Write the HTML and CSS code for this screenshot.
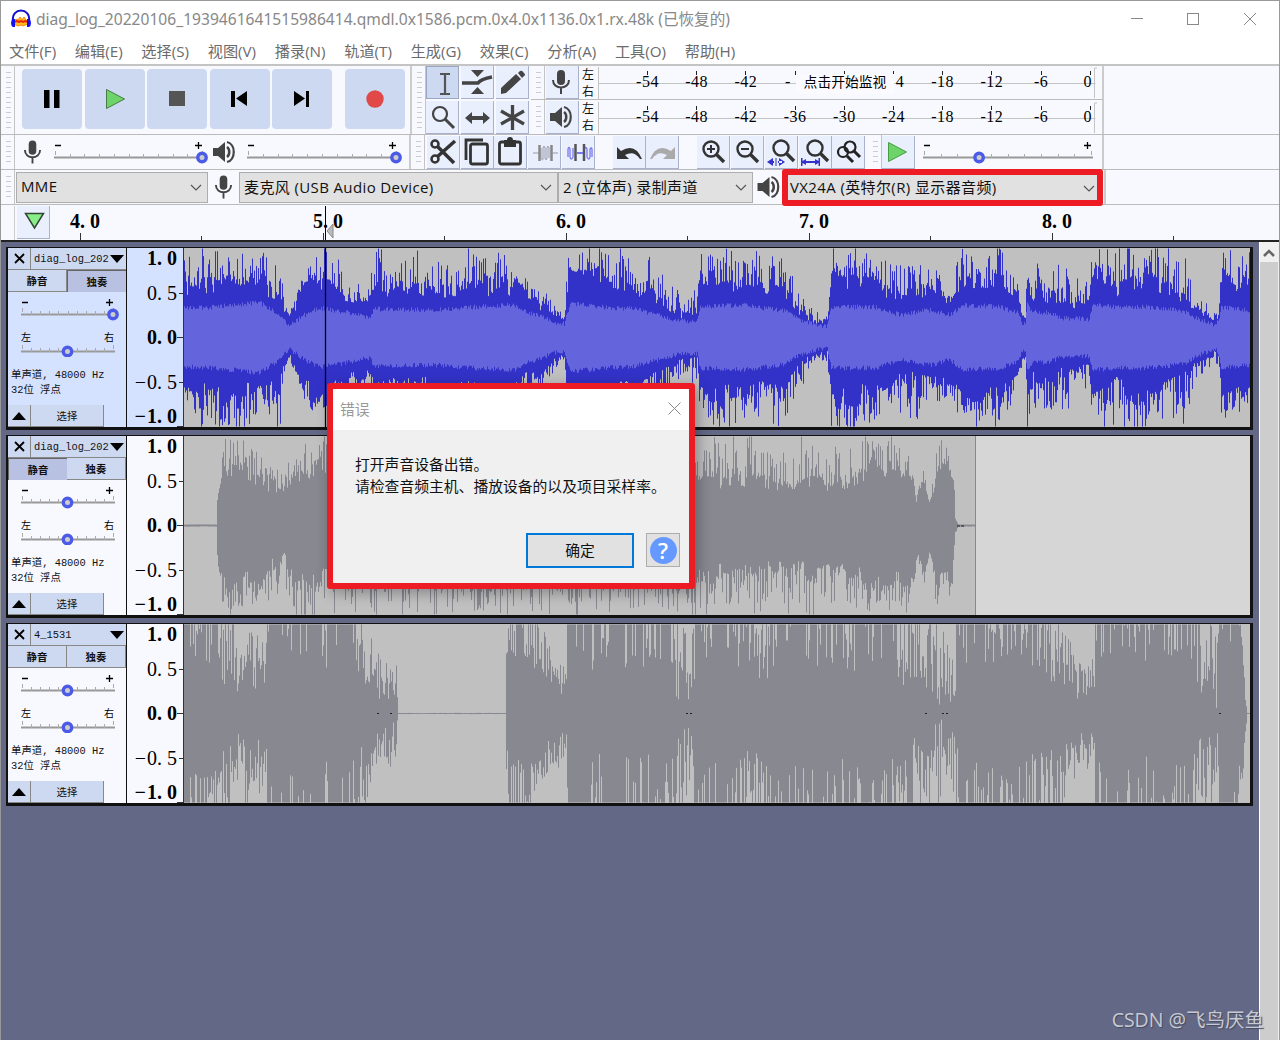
FILE: index.html
```
<!DOCTYPE html>
<html lang="zh-CN">

<head>
    <meta charset="UTF-8">
    <title>Audacity</title>
    <link rel="stylesheet" href="styles.css">
</head>

<body>
    <!-- Icons used more than once -->
    <svg class="defs">
        <symbol id="mic" viewBox="0 0 20 26">
            <rect x="6" y="1" width="8" height="15" rx="4" />
            <path d="M2 11c0 10 16 10 16 0M10 18v7" fill="none" stroke="#444" stroke-width="2" />
        </symbol>
        <symbol id="speaker" viewBox="0 0 24 24">
            <path d="M1 8h5l7-6v20l-7-6H1z" />
            <path d="M15 7c3 2 3 8 0 10" stroke-width="2.5" fill="none" stroke="#444" />
            <path d="M15 2c9 2 9 18 0 20" stroke-width="2.2" fill="none" stroke="#444" />
        </symbol>
        <symbol id="lens" viewBox="0 0 30 30">
            <circle cx="13" cy="12" r="7.5" fill="none" stroke="#333" stroke-width="2.4" />
            <path d="M18 17l8 8" stroke="#333" stroke-width="3.4" />
        </symbol>
        <symbol id="chevron" viewBox="0 0 12 8">
            <path d="M1 1l5 5 5-5" fill="none" stroke="#555" stroke-width="1.2" />
        </symbol>
    </svg>

    <div class="window">
        <div class="titlebar">
            <svg class="logo" width="22" height="20" viewBox="0 0 22 20">
                <path d="M4 13l2-3 2 1 2-3 2 3 2-3 2 3 2 1v3l-3 1-2 1-2-1-3 1-4-2z" fill="#fb2" stroke="#f80" />
                <path d="M4 13l3-1 2 1 2-1 2 1 2-1 3 1" fill="none" stroke="#e20" stroke-width="2" />
                <path d="M3 12C1-2 21-2 19 12" fill="none" stroke="#11c" stroke-width="2" />
                <path d="M5 10v8H3q-2-1-2-4t2-4zM17 10v8h2q2-1 2-4t-2-4z" fill="#11e" />
            </svg>
            <span class="title">diag_log_20220106_1939461641515986414.qmdl.0x1586.pcm.0x4.0x1136.0x1.rx.48k (已恢复的)</span>
            <svg class="controls" width="126" height="14" viewBox="0 0 126 14" fill="none" stroke="#888">
                <path d="M1 6.500h12M114 1l12 12M126 1l-12 12" />
                <rect x="57.500" y="1.500" width="11" height="11" />
            </svg>
        </div>

        <div class="menubar">
            <span>文件(F)</span><span>编辑(E)</span><span>选择(S)</span><span>视图(V)</span><span>播录(N)</span><span>轨道(T)</span><span>生成(G)</span><span>效果(C)</span><span>分析(A)</span><span>工具(O)</span><span>帮助(H)</span>
        </div>

        <div class="toolbars">
            <div class="row row-main">
                <div class="bar transport">
                    <i class="grip"></i>
                    <div class="big-buttons">
                        <button><svg width="60" height="60"><path d="M22 21h5.500v18H22zM32 21h5.500v18H32z" fill="#000" /></svg></button>
                        <button><svg width="60" height="60"><path d="M21.500 20.500v19l18-9.500z" fill="#6cd468" stroke="#4a7a48" /></svg></button>
                        <button><svg width="60" height="60"><path d="M22 22h16v15H22z" fill="#555" /></svg></button>
                        <button><svg width="60" height="60"><path d="M21 22h4v16h-4zM37 22v15l-11-7.500z" fill="#000" /></svg></button>
                        <button><svg width="60" height="60"><path d="M22 22v15l11-7.500zM34 22h3v16h-3z" fill="#000" /></svg></button>
                        <button class="record"><svg width="60" height="60"><circle cx="30" cy="30" r="8.700" fill="#e14848" /></svg></button>
                    </div>
                </div>
                <div class="bar tools">
                    <i class="grip"></i>
                    <div class="tool-grid">
                        <button class="tool active"><svg width="33" height="32"><path d="M14 7h10M14 27h10M19 7v20" stroke="#555" stroke-width="2.200" /></svg></button>
                        <button class="tool"><svg width="33" height="32"><path d="M10 4h13l-6.500 7zM10 28h13l-6.500-7z" fill="#444" /><path d="M1 17h16q3-4 14-6" fill="none" stroke="#444" stroke-width="3.500" /></svg></button>
                        <button class="tool"><svg width="33" height="32"><path d="M5 28v-6L20 8l5 5-15 14zM22 7l2-2q2-1 4 2 2 2 0 3l-2 2z" fill="#444" /></svg></button>
                        <button class="tool"><svg width="33" height="32"><circle cx="14" cy="13" r="7" fill="none" stroke="#444" stroke-width="2.200" /><path d="M19 18l9 9" stroke="#444" stroke-width="3" /></svg></button>
                        <button class="tool"><svg width="33" height="32"><path d="M4 17l7-6v4h11v-4l7 6-7 6v-4H11v4z" fill="#444" /></svg></button>
                        <button class="tool"><svg width="33" height="32"><path d="M16.500 4v25M5 10l23 13M28 10L5 23" stroke="#444" stroke-width="3.300" /></svg></button>
                    </div>
                </div>
                <div class="meters">
                    <div class="bar meter">
                        <i class="grip"></i>
                        <button class="tool"><svg width="20" height="26" fill="#444"><use href="#mic" /></svg></button>
                        <div class="channels"><span>左</span><span>右</span></div>
                        <svg class="scale" width="500" height="33" data-hint="点击开始监视"></svg>
                    </div>
                    <div class="bar meter">
                        <i class="grip"></i>
                        <button class="tool"><svg width="24" height="24" fill="#444"><use href="#speaker" /></svg></button>
                        <div class="channels"><span>左</span><span>右</span></div>
                        <svg class="scale" width="500" height="33"></svg>
                    </div>
                </div>
            </div>

            <div class="row row-edit">
                <div class="bar mixer">
                    <i class="grip"></i>
                    <svg class="mic" width="19" height="26" fill="#444"><use href="#mic" /></svg>
                    <svg class="slider" width="158" height="30" data-ticks="10" data-pos="10"></svg>
                    <svg class="spk" width="24" height="24" fill="#444"><use href="#speaker" /></svg>
                    <svg class="slider" width="159" height="30" data-ticks="10" data-pos="10"></svg>
                </div>
                <div class="bar edit">
                    <i class="grip"></i>
                    <div class="edit-group">
                        <button class="tool"><svg width="32" height="32" fill="none" stroke="#333"><circle cx="8" cy="8" r="3.500" stroke-width="2.500" /><circle cx="8" cy="23" r="3.500" stroke-width="2.500" /><path d="M10 10l17 17M10 21L28 5" stroke-width="3.500" /></svg></button>
                        <button class="tool"><svg width="32" height="32" fill="none" stroke="#333" stroke-width="2.800"><rect x="9.500" y="8" width="17" height="20" rx="2" /><path d="M5 24V4h17" /></svg></button>
                        <button class="tool"><svg width="32" height="32" fill="none" stroke="#333" stroke-width="2.800"><rect x="5.500" y="6" width="21" height="22" rx="2" /><path d="M10 4h12v7H10z" fill="#333" stroke="none" /><circle cx="16" cy="4" r="3" fill="#333" stroke="none" /></svg></button>
                        <button class="tool"><svg width="32" height="32" fill="none" stroke="#888"><path d="M5 17h6M23 17h7" stroke="#99a" /><path d="M13 12v10q2 4 2 0V12q1-4 2 0v10q1 4 2 0V12q1-4 2 0v10" stroke="#99a" /><path d="M11.500 9v16M23.500 9v16" stroke-width="2.500" /></svg></button>
                        <button class="tool"><svg width="32" height="32" fill="none" stroke="#77e"><path d="M6 21v-8q1-3 2 0v8q1 4 3 0v-9M22 21v-8q2-3 3 0v8q2 4 3 0v-8q1-2 2 0v8" stroke-width="1.300" /><path d="M13.500 8v17M22 8v17" stroke="#555" stroke-width="2.500" /><path d="M15 17h6" stroke-width="2" /></svg></button>
                    </div>
                    <div class="edit-group">
                        <button class="tool"><svg width="32" height="32"><path d="M4 11v12h12l-4-4q9-5 15 4h2Q22 6 8 15z" fill="#333" /></svg></button>
                        <button class="tool"><svg width="32" height="32"><path d="M29 11v12H17l4-4q-9-5-15 4H4Q11 6 25 15z" fill="#aaa" /></svg></button>
                    </div>
                    <div class="edit-group">
                        <button class="tool"><svg width="30" height="30"><use href="#lens" /><path d="M9 12h8M13 8v8" stroke="#333" stroke-width="2" /></svg></button>
                        <button class="tool"><svg width="30" height="30"><use href="#lens" /><path d="M9 12h8" stroke="#333" stroke-width="2" /></svg></button>
                        <button class="tool"><svg width="32" height="32"><use href="#lens" x="3" width="30" height="30" /><path d="M2 26l6-4v8zM20 26l-6-4v8zM5 25h4v2H5zM13 25h4v2h-4zM10.500 22h1v8h-1z" fill="#33c" /></svg></button>
                        <button class="tool"><svg width="32" height="32"><use href="#lens" x="3" width="30" height="30" /><path d="M2 22h1.500v3L7 23v2h9v-2l3.500 2v-3H21v8h-1.500v-3L16 29v-2H7v2l-3.500-2v3H2z" fill="#33c" /></svg></button>
                        <button class="tool"><svg width="32" height="32" fill="none" stroke="#222" stroke-width="2.200"><circle cx="18" cy="11" r="5.500" /><circle cx="11" cy="16" r="5" /><path d="M15 20l6 6M22 15l6 6" stroke-width="3" /></svg></button>
                    </div>
                </div>
                <div class="bar speed">
                    <i class="grip"></i>
                    <button class="tool"><svg width="32" height="32"><path d="M6.500 6.500v19L24.500 16z" fill="#6cd468" stroke="#4a9a48" /></svg></button>
                    <svg class="slider" width="178" height="30" data-ticks="10" data-pos="3.300"></svg>
                </div>
            </div>

            <div class="row row-device">
                <div class="bar device">
                    <i class="grip"></i>
                    <div class="combo host"><span>MME</span><svg width="12" height="8"><use href="#chevron" /></svg></div>
                    <svg class="mic" width="19" height="26" fill="#444"><use href="#mic" /></svg>
                    <div class="combo input"><span>麦克风 (USB Audio Device)</span><svg width="12" height="8"><use href="#chevron" /></svg></div>
                    <div class="combo chan"><span>2 (立体声) 录制声道</span><svg width="12" height="8"><use href="#chevron" /></svg></div>
                    <svg class="spk" width="25" height="24" fill="#444"><use href="#speaker" /></svg>
                    <div class="combo output"><span>VX24A (英特尔(R) 显示器音频)</span><svg width="12" height="8"><use href="#chevron" /></svg></div>
                </div>
            </div>
        </div>

        <div class="timeline">
            <i class="pad"></i>
            <button class="tool pin"><svg width="32" height="32"><path d="M8.500 7.500h18L17.500 22z" fill="#8e8" stroke="#354535" stroke-width="1.500" /></svg></button>
            <svg id="ruler" width="1229" height="34"></svg>
        </div>

        <div class="workspace">
            <div class="tracks" id="tracks"></div>
            <div class="scrollbar"><svg width="12" height="8" fill="none" stroke="#666" stroke-width="2.500"><path d="M1 7l5-5 5 5" /></svg></div>
        </div>
    </div>

    <div class="dialog">
        <div class="dialog-title"><span>错误</span><svg width="13" height="13" stroke="#888"><path d="M.5.5l12 12M12.500.5l-12 12" /></svg></div>
        <div class="dialog-body">
            <p>打开声音设备出错。</p>
            <p>请检查音频主机、播放设备的以及项目采样率。</p>
            <div class="dialog-buttons">
                <button class="ok">确定</button>
                <button class="help"><span>?</span></button>
            </div>
        </div>
    </div>

    <div class="watermark">CSDN @飞鸟厌鱼</div>

    <script src="script.js"></script>
</body>

</html>
```
FILE: styles.css
```
* {
    box-sizing: border-box;
}

body {
    margin: 0;
    width: 1280px;
    height: 1040px;
    overflow: hidden;
    position: relative;
    font-family: "Open Sans", "Noto Sans CJK SC", sans-serif;
    color: #111;
}

button {
    border: 0;
    padding: 0;
    font: inherit;
    color: inherit;
}

svg {
    display: block;
    flex: none;
}

.defs {
    display: none;
}

.window {
    height: 1040px;
    border: 1px solid #999;
    border-bottom: 0;
    display: flex;
    flex-direction: column;
    background: #f8f9ff;
}

/* Title and menu */
.titlebar {
    height: 38px;
    background: #fff;
    display: flex;
    align-items: center;
    padding: 0 23px 2px 9px;
    color: #888;
}

.title {
    font-family: "Noto Sans", "Noto Sans CJK SC", sans-serif;
    font-size: 15.600px;
    margin: -1px 0 0 4px;
    white-space: nowrap;
}

.controls {
    margin-left: auto;
}

.menubar {
    height: 25px;
    background: #fff;
    display: flex;
    align-items: center;
    gap: 18.700px;
    padding: 0 0 4px 8px;
    font-size: 15.200px;
    color: #6b6b6b;
    white-space: nowrap;
}

/* Toolbars */
.toolbars {
    border-top: 2px solid #c4c4c4;
    height: 142px;
}

.row {
    display: flex;
    height: 35px;
    border-bottom: 1px solid #bbb;
}

.row-main {
    height: 69px;
}

.bar {
    display: flex;
    align-items: center;
    border-right: 2px solid #ccc;
}

.grip {
    align-self: stretch;
    width: 14px;
    flex: none;
    border-right: 1px solid #c4c4c4;
    background: repeating-linear-gradient(#ccc 0 1px, transparent 1px 5px) 5px 6px / 5px calc(100% - 12px) no-repeat;
}

.transport {
    width: 411px;
}

.big-buttons {
    display: flex;
    gap: 2.500px;
    margin: 0 0 2px 7px;
}

.big-buttons button {
    width: 60px;
    height: 60px;
    border-radius: 4px;
    background: #cdd9f1;
}

.big-buttons .record {
    margin-left: 10px;
}

.tools {
    width: 119px;
    border-right: 0;
}

.tool-grid {
    display: grid;
    grid-template-columns: repeat(3, 33px);
    gap: 2px;
}

.tool {
    width: 33px;
    height: 33px;
    flex: none;
    background: #e9effd;
    border-right: 1px solid #a9b2cc;
    border-bottom: 1px solid #a9b2cc;
    display: flex;
    align-items: center;
    justify-content: center;
    overflow: hidden;
}

.tool.active {
    background: #cdd9f1;
    border: 1px solid #9ba6c2;
}

.meters {
    width: 573px;
    display: flex;
    flex-direction: column;
}

.meter {
    height: 34px;
    border-bottom: 1px solid #bbb;
}

.meter + .meter {
    border-bottom: 0;
}

.meter .tool {
    margin-left: 1px;
}

.meter .tool svg {
    margin-right: 2px;
}

.channels {
    display: flex;
    flex-direction: column;
    width: 18px;
    padding-left: 3px;
    font-size: 12px;
    line-height: 17px;
}

.scale text {
    font: 16px "Liberation Serif", serif;
    letter-spacing: .5px;
    text-anchor: middle;
}

.scale .hint {
    font: 13.800px "Noto Sans CJK SC", sans-serif;
    letter-spacing: 0;
}

.mixer {
    width: 410px;
}

.mixer .mic {
    margin: 0 8px 0 8px;
}

.mixer .spk {
    margin: 0 7px 0 4px;
}

.edit {
    width: 457px;
    border-right: 0;
}

.edit-group {
    display: flex;
    gap: .7px;
    margin-right: 18px;
}

.edit .grip {
    margin-right: 2px;
}

.edit-group:last-child {
    margin-right: 0;
}

.speed {
    width: 236px;
}

.speed .tool {
    margin-right: 4px;
}

.device {
    width: 1105px;
}

.combo {
    height: 31px;
    background: #e1e1e1;
    border: 1px solid #adadad;
    display: flex;
    align-items: center;
    justify-content: space-between;
    padding: 0 5px 2px 4px;
    font-size: 15px;
    letter-spacing: .38px;
    white-space: nowrap;
}

.combo svg {
    margin-top: 4px;
}

.host {
    width: 192px;
    margin-left: 1px;
}

.device .mic {
    margin: 0 6px;
}

.input {
    width: 319px;
}

.chan {
    width: 195px;
}

.device .spk {
    margin: 0 1px 0 3px;
}

.output {
    width: 321px;
    height: 37px;
    border: 6px solid #ed1c24;
    border-radius: 3px;
    padding: 0 2px 1px;
    position: relative;
}

/* Timeline */
.timeline {
    height: 36px;
    display: flex;
    border-bottom: 2px solid #222;
}

.pad {
    width: 14px;
    border-right: 1px solid #ccc;
}

.pin {
    margin: 0 0 0 2px;
}

#ruler text {
    font: bold 20px "Liberation Serif", serif;
    text-anchor: middle;
}

/* Tracks */
.workspace {
    flex: 1;
    display: flex;
    background: #636886;
}

.tracks {
    width: 1257px;
    padding: 5px 5px 0;
    display: flex;
    flex-direction: column;
    gap: 5px;
}

.track {
    height: 183px;
    display: flex;
    border: 2px solid #111;
    border-width: 1px 3px 3px 2px;
    background: #f8f9ff;
    font: 10.400px "Liberation Mono", "Noto Sans CJK SC", monospace;
}

.track.focus {
    background: #d5e2ff;
}

.panel {
    width: 119px;
    flex: none;
    border-right: 1px solid #111;
    display: flex;
    flex-direction: column;
}

.head,
.mute-solo,
.foot {
    display: flex;
}

.head > *,
.mute-solo > *,
.foot > * {
    background: #cdd9f1;
    height: 22px;
    display: flex;
    align-items: center;
    justify-content: center;
    border-right: 1px solid #888;
    border-bottom: 1px solid #888;
}

.head .close,
.foot .fold {
    width: 23px;
}

.head .name {
    flex: 1;
    justify-content: space-between;
    padding: 0 2px 0 3px;
    border-right: 0;
}

.mute-solo > * {
    width: 50%;
    height: 22px;
    font-weight: bold;
}

.mute-solo .down {
    background: #b9c1e2;
    border: 1px solid #666;
    border-width: 1px 0 0 1px;
}

.panel .slider {
    margin-left: 9px;
}

.panel .slider:nth-child(3) {
    margin-top: 2px;
}

.panel .slider text {
    font-size: 10px;
}

.info {
    padding: 11px 0 0 3px;
    line-height: 15px;
    white-space: pre;
}

.foot {
    margin-top: auto;
}

.foot .select {
    width: 73px;
}

.vruler text {
    font: 20px "Liberation Serif", serif;
    text-anchor: end;
}

.vruler .bold {
    font-weight: bold;
}

.wave {
    background: #c0c0c0;
}

.scrollbar {
    flex: 1;
    margin-left: 1px;
    background: #cdcdcd;
    border-left: 1px solid #fff;
    border-right: 1px solid #eee;
}

.scrollbar svg {
    box-sizing: content-box;
    padding: 7px 3px 5px;
    background: #f0f0f0;
}

/* Error dialog */
.dialog {
    position: absolute;
    left: 327px;
    top: 383px;
    width: 368px;
    height: 206px;
    border: 6px solid #ed1c24;
    border-radius: 3px;
    background: #f0f0f0;
    box-shadow: 3px 4px 14px rgba(0, 0, 0, .3);
    font-size: 14.800px;
}

.dialog-title {
    height: 41px;
    background: #fff;
    display: flex;
    align-items: center;
    justify-content: space-between;
    padding: 0 8px 2px 7px;
    color: #999;
}

.dialog-body {
    padding: 23px 9px 0 22px;
}

.dialog-body p {
    margin: 0;
    line-height: 22px;
    white-space: nowrap;
}

.dialog-buttons {
    display: flex;
    justify-content: flex-end;
    gap: 12px;
    margin-top: 36px;
}

.ok {
    width: 108px;
    height: 35px;
    padding-bottom: 2px;
    background: #e1e1e1;
    border: 2px solid #0078d7;
}

.help {
    width: 34px;
    height: 34px;
    background: #e1e1e1;
    border: 1px solid #adadad;
    display: flex;
    align-items: center;
    justify-content: center;
}

.help span {
    width: 27px;
    height: 27px;
    border-radius: 50%;
    background: #6699ff;
    color: #fff;
    font-size: 22px;
    font-weight: 600;
    line-height: 27px;
}

.watermark {
    position: absolute;
    right: 16px;
    bottom: 6px;
    font-size: 19.500px;
    line-height: 28px;
    color: #c8cad2;
    text-shadow: 1px 1px 1px #444a60;
    white-space: nowrap;
}
```
FILE: script.js
```
// Sliders: line, ticks, end labels and thumb
function sliderMarkup(width, ticks, pos, left, right) {
    const x0 = 5, x1 = width - 6;
    const step = (x1 - x0) / ticks;
    let out = `<path d="M${x0 - 1} 20.5H${x1 + 2}" stroke="#999" stroke-width="2"/>`;
    for (let i = 0; i <= ticks; i++) {
        const long = i == 0 || i == ticks;
        out += `<path d="M${Math.round(x0 + i * step) + .5} ${long ? 14 : 17}v4" stroke="#aaa"/>`;
    }
    const cx = x0 + pos * step;
    out += left
        ? `<text x="${x0 - 1}" y="10">${left}</text><text x="${x1 - 9}" y="10">${right}</text>`
        : `<path d="M${x0} 8.5h6M${x1 - 7} 8.5h7M${x1 - 3.5} 5v7" stroke="#000" stroke-width="1.3"/>`;
    out += `<circle cx="${cx}" cy="20.500" r="4.200" fill="#ccc" stroke="#4b5be8" stroke-width="3.400"/>`;
    return out;
}

document.querySelectorAll('.slider').forEach(s => {
    s.innerHTML = sliderMarkup(+s.getAttribute('width'), +s.dataset.ticks, +s.dataset.pos);
});

// Level meters
document.querySelectorAll('.scale').forEach(s => {
    const hint = s.dataset.hint;
    let out = '<path d="M1.500 1v32M1.500 17.500h497M497.500 2v30M497.500 2h3" stroke="#c4c4c4" fill="none"/>';
    for (let i = 0; i < 10; i++) {
        const x = 51 + i * 49.200;
        out += `<path d="M${Math.round(x) - .5} 5v4" stroke="#222"/>`;
        // the hint takes the place of the three middle labels
        if (hint && i > 2 && i < 6) continue;
        const label = i == 9 ? '0' : i * 6 - 54;
        out += `<text x="${i == 9 ? x - 3 : x - .5}" y="21">${label}</text>`;
    }
    if (hint) {
        out += '<rect x="199" y="8" width="98" height="20" fill="#fbfbff"/>';
        out += `<text x="191" y="21">-</text><text class="hint" x="248" y="21">${hint}</text><text x="303" y="21">4</text>`;
    }
    s.innerHTML = out;
});

// Time ruler
let marks = '';
for (let i = 0; i < 5; i++) {
    const x = 30 + i * 243;
    marks += `<path d="M${x + .5} 27v7M${x + 121.500} 30v4" stroke="#333"/>`;
    marks += `<text x="${x + 5}" y="22" dx="0 0 5">${4 + i}.0</text>`;
}
marks += '<path d="M275.500 0v34" stroke="#000"/><path d="M277 25l6-7v14z" fill="#bbb" stroke="#888"/>';
document.getElementById('ruler').innerHTML = marks;

// Waveforms: [x, body, peak, rms]
const tracks = [
    {
        name: 'diag_log_202', solo: true, focus: true, gain: 10, clip: 1066, seed: 7,
        env: [[0, 50, 75, 27], [30, 54, 92, 28], [50, 58, 95, 30], [75, 50, 96, 33], [90, 45, 80, 23], [96, 50, 92, 20],
            [99, 26, 40, 16], [105, 19, 23, 9], [120, 50, 62, 20], [135, 60, 96, 27], [155, 42, 80, 24], [185, 36, 48, 18],
            [190, 50, 98, 26], [250, 45, 80, 25], [290, 50, 85, 28], [330, 50, 88, 30], [345, 40, 55, 22],
            [360, 30, 60, 17], [370, 20, 34, 13], [380, 20, 34, 11], [386, 68, 96, 32], [420, 58, 92, 28],
            [450, 48, 85, 26], [480, 35, 68, 18], [495, 22, 50, 14], [513, 22, 50, 14], [516, 58, 95, 28],
            [560, 52, 94, 30], [600, 45, 85, 24], [615, 25, 50, 15], [635, 14, 26, 9], [643, 16, 28, 9],
            [647, 60, 98, 28], [690, 52, 90, 28], [716, 37, 75, 20], [746, 48, 88, 25], [766, 38, 55, 20],
            [779, 58, 98, 30], [816, 55, 94, 28], [833, 42, 60, 22], [838, 22, 32, 12], [841, 22, 32, 12],
            [843, 65, 98, 30], [848, 36, 68, 23], [866, 42, 75, 22], [876, 30, 75, 17], [905, 33, 55, 16],
            [908, 65, 95, 30], [932, 48, 88, 28], [962, 58, 98, 28], [1000, 42, 88, 24], [1013, 28, 45, 16],
            [1031, 16, 28, 9], [1034, 22, 35, 14], [1037, 62, 88, 28], [1066, 50, 85, 25]]
    },
    {
        name: 'diag_log_202', mute: true, gain: 5, clip: 792, seed: 21,
        env: [[0, 1, 1, 0], [32, 1, 1, 0], [33, 28, 32, 0], [38, 60, 92, 0], [70, 50, 85, 0], [100, 32, 65, 0],
            [108, 50, 90, 0], [200, 45, 88, 0], [300, 45, 88, 0], [400, 42, 88, 0], [516, 45, 94, 0], [560, 45, 94, 0],
            [610, 36, 80, 0], [622, 45, 98, 0], [650, 36, 78, 0], [690, 58, 96, 0], [710, 50, 85, 0], [726, 48, 80, 0],
            [732, 24, 45, 0], [739, 45, 58, 0], [745, 22, 28, 0], [750, 38, 60, 0], [753, 55, 96, 0], [768, 52, 85, 0],
            [771, 5, 8, 0], [774, 1, 1, 0], [792, 1, 1, 0]]
    },
    {
        name: '4_1531', gain: 5, clip: 1066, seed: 33,
        env: [[0, 48, 220, 0], [30, 50, 180, 0], [45, 25, 110, 0], [63, 18, 90, 0], [82, 25, 75, 0], [84, 55, 260, 0],
            [165, 52, 260, 0], [175, 35, 110, 0], [190, 15, 70, 0], [203, 3, 55, 0], [212, 3, 55, 0], [214, .5, .5, 0],
            [321, .5, .5, 0], [322, 28, 60, 0], [327, 55, 130, 0], [350, 45, 110, 0], [368, 24, 55, 0], [382, 18, 55, 0],
            [384, 48, 250, 0], [480, 42, 220, 0], [496, 10, 90, 0], [508, 12, 90, 0], [514, 50, 250, 0],
            [575, 40, 130, 0], [584, 35, 100, 0], [587, 48, 250, 0], [700, 42, 220, 0], [740, 18, 100, 0],
            [758, 4, 90, 0], [770, 15, 85, 0], [780, 60, 220, 0], [850, 38, 140, 0], [885, 30, 90, 0], [893, 18, 60, 0],
            [910, 18, 60, 0], [912, 52, 250, 0], [1000, 50, 240, 0], [1015, 22, 100, 0], [1034, 3, 100, 0],
            [1038, 60, 230, 0], [1052, 80, 160, 0], [1057, 45, 90, 0], [1061, 14, 24, 0], [1063, .5, .5, 0],
            [1066, .5, .5, 0]],
        dots: [193, 206, 502, 506, 741, 758, 762, 1035]
    }
];

function random(seed) {
    return () => {
        seed = (seed * 1664525 + 1013904223) % 4294967296;
        return seed / 4294967296;
    };
}

function level(env, x) {
    let i = 1;
    while (i < env.length - 1 && env[i][0] < x) i++;
    const a = env[i - 1], b = env[i];
    const t = (x - a[0]) / (b[0] - a[0]);
    return [1, 2, 3].map(k => a[k] + (b[k] - a[k]) * t);
}

function wave(t) {
    const rnd = random(t.seed);
    const mid = 89.500;
    const power = t.dots ? 1.1 : 2.6;
    let peak = '', rms = '';
    let holdUp = 1, holdDown = 1;
    for (let x = 0; x < t.clip; x++) {
        const [body, top, r] = level(t.env, x);
        // the body keeps its height for a few columns, the peaks do not
        if (rnd() < .35) holdUp = .82 + rnd() * .34;
        if (rnd() < .35) holdDown = .82 + rnd() * .38;
        const amp = hold => Math.min(89, body * hold + (top - body) * Math.pow(rnd(), power));
        const up = amp(holdUp), down = amp(holdDown);
        peak += `M${x + .5} ${(mid - up).toFixed(1)}V${(mid + down).toFixed(1)}`;
        if (r) {
            rms += `M${x + .5} ${(mid - r - rnd() * 5).toFixed(1)}V${(mid + r + rnd() * 5).toFixed(1)}`;
        }
    }
    let out = `<path d="${peak}" stroke="${t.focus ? '#3232c8' : '#888891'}"/><path d="${rms}" stroke="#6464dc"/>`;
    if (t.clip < 1066) {
        out += `<rect x="${t.clip}" width="${1066 - t.clip}" height="179" fill="#d6d6d6"/><path d="M${t.clip - .5} 0v179" stroke="#888"/>`;
        out += '<path d="M773 90h7" stroke="#222" stroke-dasharray="3 1"/>';
    }
    (t.dots || []).forEach(x => {
        out += `<path d="M${x} 89.500h2" stroke="#222"/>`;
    });
    if (t.focus) {
        out += '<path d="M141.500 0v179" stroke="#000" stroke-width="1.300"/>';
    }
    return out;
}

document.getElementById('tracks').innerHTML = tracks.map(t => `
    <div class="track ${t.focus ? 'focus' : ''}">
        <div class="panel">
            <div class="head">
                <span class="close"><svg width="11" height="11" stroke="#000" stroke-width="1.800"><path d="M1 1l9 9M10 1l-9 9"/></svg></span>
                <span class="name">${t.name}<svg width="14" height="8"><path d="M0 0h14L7 8z"/></svg></span>
            </div>
            <div class="mute-solo"><span class="${t.mute ? 'down' : ''}">静音</span><span class="${t.solo ? 'down' : ''}">独奏</span></div>
            <svg class="slider" width="108" height="37">${sliderMarkup(102, 10, t.gain)}</svg>
            <svg class="slider" width="108" height="26">${sliderMarkup(102, 10, 5, '左', '右')}</svg>
            <div class="info">单声道, 48000 Hz
32位 浮点</div>
            <div class="foot"><span class="fold"><svg width="14" height="8"><path d="M0 8h14L7 0z"/></svg></span><span class="select">选择</span></div>
        </div>
        <svg class="vruler" width="57" height="179">
            <text class="bold" x="50" y="17" dx="0 0 5">1.0</text>
            <text x="50" y="52" dx="0 0 5">0.5</text>
            <text class="bold" x="50" y="96" dx="0 0 5">0.0</text>
            <text x="50" y="141" dx="0 1 0 5">−0.5</text>
            <text class="bold" x="50" y="175" dx="0 1 0 5">−1.0</text>
            <path d="M52 45.500h4M50 89.500h6M52 134.500h4M50 178.500h6M56.500 0v179" stroke="#333"/>
        </svg>
        <svg class="wave" width="1066" height="179">${wave(t)}</svg>
    </div>`).join('');
```
